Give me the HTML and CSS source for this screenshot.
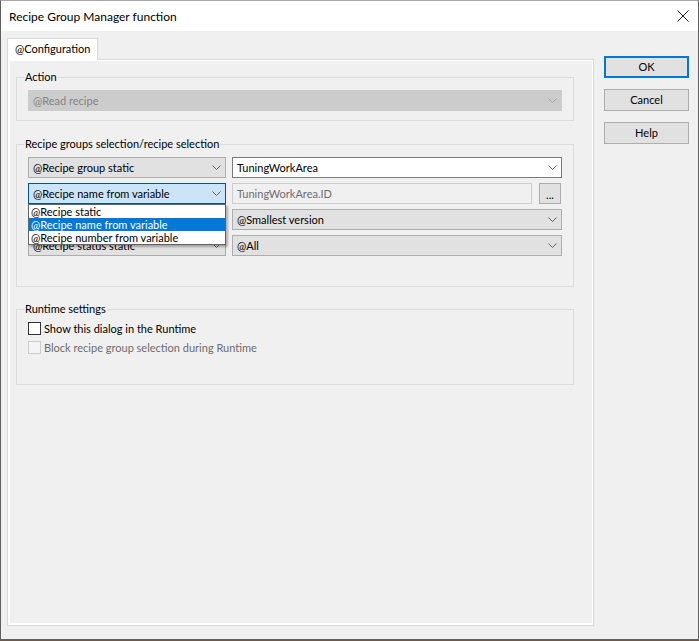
FILE: index.html
```html
<!DOCTYPE html>
<html>
<head>
<meta charset="utf-8">
<title>Recipe Group Manager function</title>
<link rel="stylesheet" href="styles.css">
</head>
<body>
<div class="window">
  <div class="titlebar">
    <span class="title">Recipe Group Manager function</span>
    <svg class="close" width="12" height="12" viewBox="0 0 12 12"><path d="M0.5 0.5L11.5 11.5M11.5 0.5L0.5 11.5" stroke="#1a1a1a" stroke-width="1" fill="none"/></svg>
  </div>
  <div class="client">
    <div class="tabctl">
      <div class="tabstrip"><div class="tab">@Configuration</div></div>
      <div class="tabpage">
        <fieldset class="group g-action">
          <legend>Action</legend>
          <div class="combo disabled"><span>@Read recipe</span><svg class="chev" width="9" height="5" viewBox="0 0 9 5"><polyline points="0.5,0.5 4.5,4.5 8.5,0.5" /></svg></div>
        </fieldset>
        <fieldset class="group g-select">
          <legend>Recipe groups selection/recipe selection</legend>
          <div class="rows">
            <div class="row">
              <div class="combo left"><span>@Recipe group static</span><svg class="chev" width="9" height="5" viewBox="0 0 9 5"><polyline points="0.5,0.5 4.5,4.5 8.5,0.5" /></svg></div>
              <div class="combo right white"><span>TuningWorkArea</span><svg class="chev" width="9" height="5" viewBox="0 0 9 5"><polyline points="0.5,0.5 4.5,4.5 8.5,0.5" /></svg></div>
            </div>
            <div class="row">
              <div class="combo left focused"><span>@Recipe name from variable</span><svg class="chev" width="9" height="5" viewBox="0 0 9 5"><polyline points="0.5,0.5 4.5,4.5 8.5,0.5" /></svg>
                <ul class="droplist">
                  <li>@Recipe static</li>
                  <li class="sel">@Recipe name from variable</li>
                  <li>@Recipe number from variable</li>
                </ul>
              </div>
              <div class="right pair">
                <div class="textbox disabled">TuningWorkArea.ID</div>
                <div class="dots">...</div>
              </div>
            </div>
            <div class="row">
              <div class="combo left"><span></span><svg class="chev" width="9" height="5" viewBox="0 0 9 5"><polyline points="0.5,0.5 4.5,4.5 8.5,0.5" /></svg></div>
              <div class="combo right"><span>@Smallest version</span><svg class="chev" width="9" height="5" viewBox="0 0 9 5"><polyline points="0.5,0.5 4.5,4.5 8.5,0.5" /></svg></div>
            </div>
            <div class="row">
              <div class="combo left"><span>@Recipe status static</span><svg class="chev" width="9" height="5" viewBox="0 0 9 5"><polyline points="0.5,0.5 4.5,4.5 8.5,0.5" /></svg></div>
              <div class="combo right"><span>@All</span><svg class="chev" width="9" height="5" viewBox="0 0 9 5"><polyline points="0.5,0.5 4.5,4.5 8.5,0.5" /></svg></div>
            </div>
          </div>
        </fieldset>
        <fieldset class="group g-runtime">
          <legend>Runtime settings</legend>
          <div class="check"><span class="box"></span><span>Show this dialog in the Runtime</span></div>
          <div class="check disabled"><span class="box"></span><span>Block recipe group selection during Runtime</span></div>
        </fieldset>
      </div>
    </div>
    <div class="buttons">
      <div class="btn default">OK</div>
      <div class="btn">Cancel</div>
      <div class="btn">Help</div>
    </div>
  </div>
</div>
</body>
</html>
```

FILE: styles.css
```css
html, body {
  margin: 0;
  padding: 0;
}
body {
  background: #6f5b45;
  font-family: Lato, "Liberation Sans", sans-serif;
  font-size: 11px;
  color: #000;
  width: 699px;
  height: 641px;
  overflow: hidden;
}
.window {
  width: 697px;
  height: 638px;
  border: 1px solid #5f5f5f;
  border-top-color: #a8a8a8;
  background: #f0f0f0;
  display: flex;
  flex-direction: column;
}
.titlebar {
  height: 30px;
  flex: none;
  background: #fff;
  display: flex;
  align-items: center;
  justify-content: space-between;
  padding: 0 9px 0 8px;
}
.title {
  font-size: 12px;
  line-height: 14px;
  padding-top: 1px;
}
.close {
  display: block;
}
.client {
  flex: 1;
  display: flex;
  gap: 10px;
  padding: 7px 9px 13px 6px;
  min-height: 0;
}
.tabctl {
  width: 587px;
  display: flex;
  flex-direction: column;
}
.tabstrip {
  height: 21px;
  display: flex;
  flex: none;
}
.tab {
  width: 91px;
  height: 22px;
  box-sizing: border-box;
  border: 1px solid #d9d9d9;
  border-bottom: none;
  background: #fff;
  padding-left: 7px;
  line-height: 20px;
  z-index: 1;
  position: relative;
}
.tabpage {
  flex: 1;
  border: 1px solid #d9d9d9;
  box-shadow: inset 2px -2px 0 #fff, inset -1px 1px 0 #fff;
  background: #f0f0f0;
  padding: 10px 19px 0 8px;
}
.group {
  margin: 0;
  border: 1px solid #dcdcdc;
  min-width: 0;
  padding: 6px 11px 9px 11px;
}
.group legend {
  margin-left: -4px;
  padding: 0 1px;
  line-height: 14px;
}
.g-select {
  margin-top: 16px;
  padding-bottom: 30px;
}
.g-runtime {
  margin-top: 15px;
  padding-top: 3px;
  padding-bottom: 27px;
}
.rows {
  display: flex;
  flex-direction: column;
  gap: 5px;
}
.row {
  display: flex;
  gap: 6px;
}
.combo {
  position: relative;
  height: 21px;
  box-sizing: border-box;
  border: 1px solid #adadad;
  background: #e1e1e1;
  display: flex;
  align-items: center;
  justify-content: space-between;
  padding: 0 4px 0 4px;
  white-space: nowrap;
}
.chev {
  display: block;
  flex: none;
}
.chev polyline {
  fill: none;
  stroke: #606060;
  stroke-width: 1;
}
.combo.disabled {
  background: #cccccc;
  border-color: #cccccc;
  color: #838383;
}
.combo.disabled .chev polyline {
  stroke: #a6a6a6;
}
.combo.left {
  width: 198px;
}
.right {
  width: 330px;
}
.combo.white {
  background: #fff;
  border-color: #7a7a7a;
}
.combo.focused {
  background: #cce4f7;
  border-color: #005499;
}
.pair {
  display: flex;
  gap: 7px;
}
.textbox {
  width: 300px;
  height: 21px;
  box-sizing: border-box;
  border: 1px solid #cccccc;
  background: #f0f0f0;
  color: #6d6d6d;
  padding-left: 4px;
  line-height: 19px;
}
.dots {
  width: 22px;
  height: 21px;
  box-sizing: border-box;
  border: 1px solid #adadad;
  background: #e1e1e1;
  text-align: center;
  line-height: 21px;
}
.droplist {
  position: absolute;
  left: -1px;
  top: 20px;
  width: 198px;
  box-sizing: border-box;
  margin: 0;
  padding: 0;
  list-style: none;
  background: #fff;
  border: 1px solid #646464;
  box-shadow: 2px 2px 2px rgba(0, 0, 0, 0.28);
  z-index: 5;
}
.droplist li {
  height: 13px;
  line-height: 13px;
  padding-left: 2px;
  color: #000;
}
.droplist li.sel {
  background: #0078d7;
  color: #fff;
}
.check {
  display: flex;
  align-items: center;
  height: 19px;
  gap: 3px;
}
.check .box {
  width: 13px;
  height: 13px;
  box-sizing: border-box;
  border: 1px solid #333;
  background: #fff;
}
.check.disabled {
  color: #6d6d6d;
}
.check.disabled .box {
  border-color: #cccccc;
  background: #f4f4f4;
}
.buttons {
  width: 85px;
  display: flex;
  flex-direction: column;
  gap: 11px;
  padding-top: 18px;
}
.btn {
  height: 22px;
  box-sizing: border-box;
  border: 1px solid #adadad;
  background: #e1e1e1;
  text-align: center;
  line-height: 20px;
}
.btn.default {
  border: 2px solid #0078d7;
  line-height: 18px;
}
```
